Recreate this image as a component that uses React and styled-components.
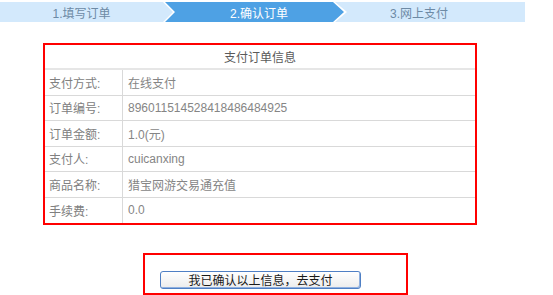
import styled, { createGlobalStyle } from "styled-components"

const GlobalStyle = createGlobalStyle`
  html, body {
    margin: 0;
    padding: 0;
    background: #ffffff;
    font-family: "Liberation Sans", "Noto Sans CJK SC", sans-serif;
    font-size: 12px;
  }
`

const Page = styled.div`
  width: 553px;
  height: 295px;
  overflow: hidden;
  padding-top: 2px;
  box-sizing: border-box;
`

const StepBar = styled.div`
  display: flex;
  width: 525px;
  height: 20px;
  background: #d3e9fc;
`

const Step = styled.div`
  width: ${(p) => p.w}px;
  display: flex;
  align-items: center;
  justify-content: center;
  padding-right: ${(p) => p.pr || 0}px;
  box-sizing: border-box;
  color: #6d8aa5;
  font-size: 12px;
`

const ActiveOuter = styled.div`
  width: 184px;
  height: 20px;
  background: #ffffff;
  clip-path: polygon(0 0, 172px 0, 184px 50%, 172px 100%, 0 100%, 10px 50%);
  display: flex;
`

const ActiveInner = styled.div`
  flex: 1;
  background: #4ea1e4;
  clip-path: polygon(2px 0, 170px 0, 181px 50%, 170px 100%, 2px 100%, 12px 50%);
  display: flex;
  align-items: center;
  justify-content: center;
  padding-left: 8px;
  color: #ffffff;
  font-size: 12px;
`

const InfoBox = styled.div`
  margin: 21px 0 0 43px;
  width: 434px;
  border: 2px solid #ff0000;
  box-sizing: border-box;
`

const Header = styled.div`
  height: 23px;
  border-bottom: 2px solid #e6e6e6;
  display: flex;
  align-items: center;
  justify-content: center;
  color: #5a5a5a;
`

const Row = styled.div`
  display: grid;
  grid-template-columns: 78px 1fr;
  height: 25.5px;
  box-sizing: border-box;
  border-bottom: ${(p) => (p.last ? "none" : "1px solid #d9d9d9")};
`

const Label = styled.div`
  display: flex;
  align-items: center;
  padding-left: 4px;
  border-right: 1px solid #d9d9d9;
  color: #808080;
`

const Value = styled.div`
  display: flex;
  align-items: center;
  padding-left: 5px;
  color: #858585;
`

const ButtonBox = styled.div`
  margin: 28px 0 0 143px;
  width: 265px;
  height: 42px;
  border: 2px solid #ff0000;
  box-sizing: border-box;
  padding: 16px 0 0 15px;
`

const PayButton = styled.button`
  width: 201px;
  height: 18px;
  padding: 0;
  border: 1px solid #4f7fc4;
  border-radius: 3px;
  background: linear-gradient(#ffffff, #ececec);
  box-shadow: inset -1px -1px 0 #8fb0e0;
  color: #1a1a1a;
  font-family: "Noto Sans CJK SC", sans-serif;
  font-size: 12px;
  line-height: 16px;
`

const rows = [
  ["支付方式:", "在线支付"],
  ["订单编号:", "896011514528418486484925"],
  ["订单金额:", "1.0(元)"],
  ["支付人:", "cuicanxing"],
  ["商品名称:", "猎宝网游交易通充值"],
  ["手续费:", "0.0"],
]

const App = () => {
  return (
    <Page>
      <GlobalStyle />
      <StepBar>
        <Step w={163}>1.填写订单</Step>
        <ActiveOuter>
          <ActiveInner>2.确认订单</ActiveInner>
        </ActiveOuter>
        <Step w={178} pr={34}>3.网上支付</Step>
      </StepBar>

      <InfoBox>
        <Header>支付订单信息</Header>
        {rows.map(([label, value], i) => (
          <Row key={label} last={i === rows.length - 1}>
            <Label>{label}</Label>
            <Value>{value}</Value>
          </Row>
        ))}
      </InfoBox>

      <ButtonBox>
        <PayButton>我已确认以上信息，去支付</PayButton>
      </ButtonBox>
    </Page>
  )
}

export default App
